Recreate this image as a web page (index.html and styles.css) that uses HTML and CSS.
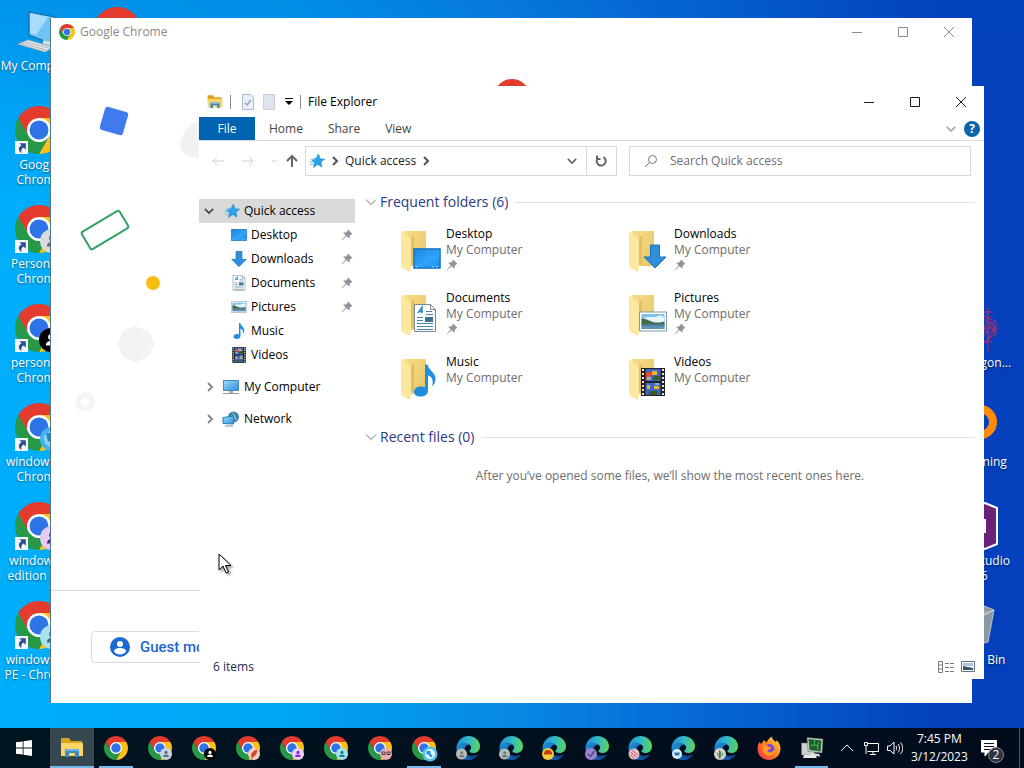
FILE: index.html
```html
<!DOCTYPE html>
<html lang="en">
<head>
    <meta charset="UTF-8">
    <meta name="viewport" content="width=device-width, initial-scale=1.0">
    <title>File Explorer</title>
    <link rel="stylesheet" href="styles.css">
</head>
<body>

    <!-- shared icons -->
    <svg class="sprite" aria-hidden="true">
        <defs>
            <linearGradient id="edgeTop" x1="0" y1="0.4" x2="1" y2="0.5">
                <stop offset="0" stop-color="#1f8fd8"/>
                <stop offset="0.5" stop-color="#2fb9c8"/>
                <stop offset="1" stop-color="#5fd45a"/>
            </linearGradient>
            <linearGradient id="edgeLow" x1="0" y1="0" x2="1" y2="1">
                <stop offset="0" stop-color="#2196dc"/>
                <stop offset="1" stop-color="#0c4c9c"/>
            </linearGradient>
            <linearGradient id="fox" x1="1" y1="0" x2="0" y2="1">
                <stop offset="0" stop-color="#ffe14a"/>
                <stop offset="0.45" stop-color="#ff8a1e"/>
                <stop offset="1" stop-color="#f5234f"/>
            </linearGradient>
            <linearGradient id="screenBlue" x1="0" y1="0" x2="1" y2="1">
                <stop offset="0" stop-color="#1c86e0"/>
                <stop offset="0.6" stop-color="#2fa4fa"/>
                <stop offset="1" stop-color="#1c8cec"/>
            </linearGradient>
            <linearGradient id="folderBack" x1="0" y1="0" x2="1" y2="1">
                <stop offset="0" stop-color="#f6dc86"/>
                <stop offset="1" stop-color="#e8c566"/>
            </linearGradient>
            <linearGradient id="pcScreen" x1="0" y1="0" x2="1" y2="1">
                <stop offset="0" stop-color="#9fdcfb"/>
                <stop offset="1" stop-color="#2a8fdc"/>
            </linearGradient>
        </defs>
        <symbol id="chrome" viewBox="0 0 48 48">
            <circle cx="24" cy="24" r="13" fill="#fff"/>
            <path fill="#e33b2e" d="M24 12H44.78a24 24 0 0 0-41.56 0L13.61 30A12 12 0 0 1 24 12Z"/>
            <path fill="#fbc116" d="M34.39 30 24 48A24 24 0 0 0 44.78 12H24A12 12 0 0 1 34.39 30Z"/>
            <path fill="#279847" d="M13.61 30 3.22 12A24 24 0 0 0 24 48L34.39 30a12 12 0 0 1-20.78 0Z"/>
            <circle cx="24" cy="24" r="9.5" fill="#2f74e6"/>
        </symbol>
        <symbol id="edge" viewBox="0 0 48 48">
            <path fill="#154a90" d="M17 16C12 24 15 34 24 38c7 3 15 1 20-1-4 7-11 11-19 11C11 48 6 40 6 32c0-8 5-14 11-16Z"/>
            <path fill="url(#edgeLow)" d="M1 23C3 14 12 9 22 12c4 1 6 3 7 5-10-1-14 8-11 15 3 8 10 12 16 14-3 1-6 2-9 2C9 48 0 36 1 23Z"/>
            <path fill="url(#edgeTop)" d="M1 22C3 9 13 0 25 0c14 0 23 11 23 20 0 9-6 14-13 14-6 0-9-2-8-5 6-5 3-11-3-14-9-4-19-1-23 7Z"/>
        </symbol>
        <symbol id="person" viewBox="0 0 10 10">
            <circle cx="5" cy="3.2" r="1.8"/>
            <path d="M1.8 8.4C1.8 6.4 3.2 5.6 5 5.6s3.2.8 3.2 2.8Z"/>
        </symbol>
        <symbol id="shortcut" viewBox="0 0 12 12">
            <path fill="#f4f6f8" d="M0 0h12v12H0z"/>
            <path fill="#2b4f95" d="M4 2h6v6L8 6C6 7 5.500 8.500 6 11 3 9.500 2.500 6 6 4Z"/>
        </symbol>
        <symbol id="pin" viewBox="0 0 12 12">
            <path fill="#8d949a" d="M7 0.500 11.500 5 10 5.600 8.700 7 8.500 9.800 5.500 7.200 1 11.300 0.600 11 4.700 6.400 2.200 3.600 5 3.400 6.500 2Z"/>
        </symbol>
        <symbol id="star" viewBox="0 0 16 16">
            <path fill="#2ba4ec" stroke="#1b7fc4" stroke-width="0.600" d="M9.500 1 11 5.700l4.600.6-3.700 2.700 1.100 5-4.300-2.500-4.200 2.900 1-4.600L3.500 8 2 6.500l5-1Z"/>
            <path stroke="#74c5f2" d="M0 9h4M1 11.500h3M2 6.500h4" fill="none"/>
        </symbol>
        <symbol id="explorer" viewBox="0 0 24 22">
            <path fill="#d9a21b" d="M1 1h8l2 3h11v5H1z"/>
            <path fill="#fbd667" d="M1 6h22v13H1z"/>
            <path fill="#3f88c0" d="M5 12h14v8h-4v-4H9v4H5z"/>
            <path fill="#6ab4e6" d="M5 12h14v2H5z"/>
        </symbol>
        <symbol id="desktopIcon" viewBox="0 0 16 12">
            <path fill="url(#screenBlue)" stroke="#0f6cb8" stroke-width="0.700" d="M.5.5h15v11H.5z"/>
            <path stroke="#cfe9fb" stroke-width="0.500" stroke-dasharray="1 1" d="M1.500 10.700h1M11 10.700h4"/>
        </symbol>
        <symbol id="arrowIcon" viewBox="0 0 24 24">
            <path fill="#2f8fdb" stroke="#1d74ba" d="M7.500.5h9v12h6.500L12 23.500 1 12.500h6.500z"/>
        </symbol>
        <symbol id="docIcon" viewBox="0 0 22 28">
            <path fill="#fff" stroke="#7b8790" d="M.5.5h16l5 5v22H.5z"/>
            <path fill="none" stroke="#7b8790" d="M16.500.5v5h5"/>
            <path fill="none" stroke="#2584c4" stroke-width="1.400" d="M4 9l4-6v6M5 7.500h4"/>
            <path stroke="#4a85ad" d="M12 7.500h6M12 10.500h7M3 13.500h6M3 16.500h6M3 19.500h16M3 22.500h16M3 25.500h16"/>
            <path fill="#3b7193" d="M11 13h8v5h-8z"/>
        </symbol>
        <symbol id="picIcon" viewBox="0 0 28 20">
            <path fill="#fff" stroke="#7e96a8" d="M.5.5h27v19H.5z"/>
            <path fill="#7fc1ec" d="M2.500 2.500h23v15h-23z"/>
            <path fill="#e8f4fb" d="M5 7c5-3 9 0 13-2s7-1 7 2v5H2.500V9z"/>
            <path fill="#3d6e4c" d="M2.500 7c5 0 9 3 13 4 4 0 7 0 10-1v3h-23z"/>
            <path fill="#5f94b8" d="M2.500 13h23v4.500h-23z"/>
            <path fill="#38617d" d="M2.500 13h23v1h-23z"/>
        </symbol>
        <symbol id="musicIcon" viewBox="0 0 22 32">
            <path fill="#1e8fe0" d="M11 0h2.500c1 6 8.500 8 8 15-.2 3-1.500 5-3.500 7 2-6 0-10-4-11v15c0 4-3.500 6-7.500 6-4 0-6.500-2-6.500-4.500C0 24 3 22 7 22c1.500 0 3 .3 4 1Z"/>
        </symbol>
        <symbol id="videoIcon" viewBox="0 0 24 28">
            <path fill="#23211f" d="M0 0h24v28H0z"/>
            <path stroke="#e4e2dc" stroke-width="2" stroke-dasharray="2 2" d="M2 1v27M22 1v27"/>
            <path fill="#3c66c8" d="M4.500 1h15v12h-15zM4.500 15h15v12h-15z"/>
            <path fill="#e14b34" d="M5 4h5v4l-3 4H5z"/>
            <path fill="#ecb52c" d="M11 3h5v4h-5zM6 17h3v4H6zM13 18h5v3h-5z"/>
            <path fill="#3d5a23" d="M13 8h6v4h-8zM8 23h8v4H8z"/>
            <path fill="#7fb5ee" d="M6 9h4v3H6zM14 15h4v2h-4z"/>
        </symbol>
        <symbol id="pcIcon" viewBox="0 0 18 16">
            <path fill="url(#pcScreen)" stroke="#4689b5" d="M1.500 1.500h15v10h-15z"/>
            <path fill="#a5b0b8" d="M7 12h4v2H7z"/>
            <path fill="#8e9aa3" d="M1 14h16v1H1z"/>
        </symbol>
        <symbol id="netIcon" viewBox="0 0 18 16">
            <circle cx="11.500" cy="6" r="5.500" fill="#3f84ac"/>
            <path fill="#85b8d2" d="M10 1c3 2 5 6 4 10l-2-5z"/>
            <path fill="url(#pcScreen)" stroke="#247db8" d="M1 6.500 11.500 5v8L1 12.500z"/>
            <path fill="#7793a5" d="M3 14.500h8v1H3z"/>
        </symbol>
        <symbol id="folder" viewBox="0 0 40 42">
            <path fill="url(#folderBack)" d="M3 1h22v35H3z"/>
            <path fill="#e3bf62" d="M10 8l3-2v28h-3z"/>
            <path fill="#fbe7a0" d="M0 1l10 7v29l-1 5-9-5z"/>
        </symbol>
        <symbol id="chevDown" viewBox="0 0 12 12">
            <path fill="none" stroke="currentColor" d="M1 3.500l5 5 5-5"/>
        </symbol>
        <symbol id="chevRight" viewBox="0 0 12 12">
            <path fill="none" stroke="currentColor" d="M4 2l4 4-4 4"/>
        </symbol>
        <symbol id="min" viewBox="0 0 12 12"><path fill="none" stroke="currentColor" d="M1 6.500h10"/></symbol>
        <symbol id="max" viewBox="0 0 12 12"><path fill="none" stroke="currentColor" d="M1.500 1.500h9v9h-9z"/></symbol>
        <symbol id="close" viewBox="0 0 12 12"><path fill="none" stroke="currentColor" d="M1 1l10 10M11 1 1 11"/></symbol>
    </svg>

    <main class="desktop">

        <!-- desktop shortcuts -->
        <div class="shortcuts col-one">
            <a class="shortcut" href="#">
                <svg viewBox="0 0 48 48">
                    <path fill="#6fc3f5" stroke="#1f5f94" d="M14 5l26 5v28L14 28z"/>
                    <path fill="#a8dcfa" d="M15 6l18 4-12 18-6-2z"/>
                    <path fill="#d9dfe4" d="M28 33l14 4v3l-14-3z"/>
                    <path fill="#e4e8eb" stroke="#9fadb7" d="M3 37l10-4 25 7-8 5z"/>
                    <path fill="none" stroke="#a9b5be" d="M6 36l25 7M10 35l24 6"/>
                </svg>
                <span>My Computer</span>
            </a>
            <a class="shortcut" href="#">
                <svg viewBox="0 0 48 48"><use href="#chrome"/><use href="#shortcut" y="35" width="13" height="13"/></svg>
                <span>Google<br>Chrome</span>
            </a>
            <a class="shortcut" href="#">
                <svg viewBox="0 0 48 48"><use href="#chrome"/><circle cx="37" cy="36" r="12" fill="#d8dcdf"/><use href="#person" x="29" y="28" width="16" height="16" fill="#5d6870"/><use href="#shortcut" y="35" width="13" height="13"/></svg>
                <span>Person 1 -<br>Chrome</span>
            </a>
            <a class="shortcut" href="#">
                <svg viewBox="0 0 48 48"><use href="#chrome"/><circle cx="36" cy="36" r="12" fill="#000"/><use href="#person" x="28" y="28" width="16" height="16" fill="#fff"/><use href="#shortcut" y="35" width="13" height="13"/></svg>
                <span>personal -<br>Chrome</span>
            </a>
            <a class="shortcut" href="#">
                <svg viewBox="0 0 48 48"><use href="#chrome"/><circle cx="37" cy="36" r="12" fill="#42b4ee"/><circle cx="37" cy="36" r="8" fill="#8ad4f8"/><path fill="#1c85cc" d="M31 30h6v7l-4 2z"/><use href="#shortcut" y="35" width="13" height="13"/></svg>
                <span>windows 8 -<br>Chrome</span>
            </a>
            <a class="shortcut" href="#">
                <svg viewBox="0 0 48 48"><use href="#chrome"/><circle cx="37" cy="36" r="12" fill="#e6c9f5"/><use href="#person" x="29" y="28" width="16" height="16" fill="#5a1f8c"/><use href="#shortcut" y="35" width="13" height="13"/></svg>
                <span>windows 9<br>edition - C..</span>
            </a>
            <a class="shortcut" href="#">
                <svg viewBox="0 0 48 48"><use href="#chrome"/><circle cx="37" cy="36" r="12" fill="#a9e2ee"/><use href="#person" x="29" y="28" width="16" height="16" fill="#1f7686"/><use href="#shortcut" y="35" width="13" height="13"/></svg>
                <span>windows XP<br>PE - Chrome</span>
            </a>
        </div>
        <div class="shortcuts col-two">
            <a class="shortcut" href="#">
                <svg viewBox="0 0 48 48"><use href="#chrome"/></svg>
                <span>Chrome</span>
            </a>
        </div>
        <div class="shortcuts col-last">
            <a class="shortcut" href="#">
                <svg viewBox="0 0 48 48">
                    <g fill="none" stroke="#b32c6a">
                        <path d="M24 6 38 14l8 10-8 12-14 8M38 3v44M34 8h8M34 38h8M34 14l12 16M46 16 32 34M33 24h14M36 12l10 6v12l-10 6"/>
                        <circle cx="39" cy="24" r="5"/>
                    </g>
                </svg>
                <span>Mandragon...</span>
            </a>
            <a class="shortcut" href="#">
                <svg viewBox="0 0 48 48"><circle cx="30" cy="19" r="13" fill="none" stroke="#ff8a0a" stroke-width="8"/></svg>
                <span>LightTuning</span>
            </a>
            <a class="shortcut" href="#">
                <svg viewBox="0 0 48 48">
                    <path fill="#69217a" stroke="#fff" stroke-width="2" d="M16 6 35 1l12 5v36l-12 5-19-5z"/>
                    <path fill="#fff" d="M20 17h16v14H20z"/>
                </svg>
                <span>Visual Studio<br>2026</span>
            </a>
            <a class="shortcut" href="#">
                <svg viewBox="0 0 48 48">
                    <path fill="#8b98a3" stroke="#b9c6cf" d="M6 8l28-3 10 4-6 32-12 3-16-3z"/>
                    <path fill="#9dabb5" d="M8 10h24l10 0-8 4z"/>
                    <path stroke="#dbe4ea" fill="none" d="M6 8l28 6 10-5"/>
                </svg>
                <span>Recycle Bin</span>
            </a>
        </div>

        <!-- Chrome profile picker -->
        <section class="window chrome-window">
            <header class="titlebar">
                <svg class="icon16"><use href="#chrome"/></svg>
                <h2>Google Chrome</h2>
                <div class="controls">
                    <button type="button" aria-label="Minimize"><svg><use href="#min"/></svg></button>
                    <button type="button" aria-label="Maximize"><svg><use href="#max"/></svg></button>
                    <button type="button" aria-label="Close"><svg><use href="#close"/></svg></button>
                </div>
            </header>
            <div class="picker">
                <svg class="picker-logo"><use href="#chrome"/></svg>
                <svg class="shapes" viewBox="0 0 200 420">
                    <rect x="51" y="63" width="24" height="24" rx="3" fill="#3f7bee" transform="rotate(16 63 75)"/>
                    <path fill="#eff2f3" d="M147 76c8 0 18 7 18 17s-4 19-16 19c-9 0-20-4-20-12 0-9 9-24 18-24Z"/>
                    <rect x="32" y="174" width="44" height="20" rx="2" fill="none" stroke="#35a065" stroke-width="2" transform="rotate(-31 54 184)"/>
                    <circle cx="102" cy="237" r="7" fill="#f8bd10"/>
                    <path fill="#f1f3f4" d="M84 280l14 5 5 13-6 13-12 5-13-5-5-13 5-13z"/>
                    <circle cx="34" cy="356" r="10" fill="#f4f5f5"/>
                    <path fill="#fff" d="M34 351l5 5-5 5-5-5z"/>
                </svg>
            </div>
            <footer class="picker-footer">
                <button type="button" class="guest">
                    <svg viewBox="0 0 22 22">
                        <circle cx="11" cy="11" r="10" fill="#1c69d4"/>
                        <circle cx="11" cy="8" r="3" fill="#fff"/>
                        <path fill="#fff" d="M5 15.500c0-2.500 3-3.500 6-3.500s6 1 6 3.500c-1.500 2-3.500 3-6 3s-4.500-1-6-3Z"/>
                    </svg>
                    Guest mode
                </button>
            </footer>
        </section>

        <!-- File Explorer -->
        <section class="window explorer">
            <header class="titlebar">
                <svg class="icon16"><use href="#explorer"/></svg>
                <i class="sep"></i>
                <svg class="icon16 props" viewBox="0 0 16 16"><path fill="#eaf0f7" stroke="#a9b7c9" d="M2.500.5h8l3 3v12h-11z"/><path fill="none" stroke="#8fa2bb" stroke-width="1.500" d="M5 9l2 2 4-5"/></svg>
                <svg class="icon16" viewBox="0 0 16 16"><path fill="#dfe5ee" stroke="#c8d1dd" d="M2.500.5h11v15h-11z"/></svg>
                <svg class="customize" viewBox="0 0 8 8"><path d="M0 0h8v1H0zM0 3h8L4 7z"/></svg>
                <i class="sep"></i>
                <h2>File Explorer</h2>
                <div class="controls">
                    <button type="button" aria-label="Minimize"><svg><use href="#min"/></svg></button>
                    <button type="button" aria-label="Maximize"><svg><use href="#max"/></svg></button>
                    <button type="button" aria-label="Close"><svg><use href="#close"/></svg></button>
                </div>
            </header>

            <nav class="tabs">
                <button type="button" class="file">File</button>
                <button type="button">Home</button>
                <button type="button">Share</button>
                <button type="button">View</button>
                <div class="tabs-end">
                    <button type="button" class="expand" aria-label="Expand the ribbon"><svg><use href="#chevDown"/></svg></button>
                    <button type="button" class="help" aria-label="Help">?</button>
                </div>
            </nav>

            <div class="navbar">
                <div class="arrows">
                    <button type="button" aria-label="Back"><svg viewBox="0 0 14 12"><path d="M13 6H2M6 2 2 6l4 4"/></svg></button>
                    <button type="button" aria-label="Forward"><svg viewBox="0 0 14 12"><path d="M1 6h11M8 2l4 4-4 4"/></svg></button>
                    <button type="button" class="recent" aria-label="Recent locations"><svg viewBox="0 0 6 12"><path d="M1 5l2 2 2-2"/></svg></button>
                    <button type="button" class="up" aria-label="Up"><svg viewBox="0 0 14 14"><path d="M7 13V2M2 7l5-5 5 5"/></svg></button>
                </div>
                <div class="address">
                    <svg class="icon16"><use href="#star"/></svg>
                    <svg class="crumb"><use href="#chevRight"/></svg>
                    <button type="button">Quick access</button>
                    <svg class="crumb"><use href="#chevRight"/></svg>
                    <button type="button" class="drop" aria-label="Previous locations"><svg><use href="#chevDown"/></svg></button>
                    <button type="button" class="refresh" aria-label="Refresh"><svg viewBox="0 0 14 14"><path d="M3.500 4.500a4.500 4.500 0 1 0 6-1.300M3 1.500v3.500h3.500"/></svg></button>
                </div>
                <label class="search">
                    <svg viewBox="0 0 14 14"><circle cx="8.500" cy="5.500" r="4"/><path d="M5.500 8.500 1 13"/></svg>
                    <input type="text" placeholder="Search Quick access" aria-label="Search Quick access">
                </label>
            </div>

            <div class="body">
                <ul class="tree">
                    <li><a class="active" href="#"><svg class="twist"><use href="#chevDown"/></svg><svg class="icon16"><use href="#star"/></svg>Quick access</a></li>
                    <li><a class="child" href="#"><svg class="icon16"><use href="#desktopIcon"/></svg>Desktop<svg class="pin"><use href="#pin"/></svg></a></li>
                    <li><a class="child" href="#"><svg class="icon16"><use href="#arrowIcon"/></svg>Downloads<svg class="pin"><use href="#pin"/></svg></a></li>
                    <li><a class="child" href="#"><svg class="icon16"><use href="#docIcon"/></svg>Documents<svg class="pin"><use href="#pin"/></svg></a></li>
                    <li><a class="child" href="#"><svg class="icon16"><use href="#picIcon"/></svg>Pictures<svg class="pin"><use href="#pin"/></svg></a></li>
                    <li><a class="child" href="#"><svg class="icon16"><use href="#musicIcon"/></svg>Music</a></li>
                    <li><a class="child" href="#"><svg class="icon16"><use href="#videoIcon"/></svg>Videos</a></li>
                    <li class="root"><a href="#"><svg class="twist"><use href="#chevRight"/></svg><svg class="icon18"><use href="#pcIcon"/></svg>My Computer</a></li>
                    <li class="root"><a href="#"><svg class="twist"><use href="#chevRight"/></svg><svg class="icon18"><use href="#netIcon"/></svg>Network</a></li>
                </ul>

                <div class="content">
                    <h3><svg><use href="#chevDown"/></svg>Frequent folders (6)</h3>
                    <div class="folders">
                        <a class="folder" href="#">
                            <svg viewBox="0 0 40 42"><use href="#folder"/><use href="#desktopIcon" x="12" y="18" width="28" height="21"/></svg>
                            <span><b>Desktop</b>My Computer<svg class="pin"><use href="#pin"/></svg></span>
                        </a>
                        <a class="folder" href="#">
                            <svg viewBox="0 0 40 42"><use href="#folder"/><use href="#arrowIcon" x="14" y="14" width="24" height="25"/></svg>
                            <span><b>Downloads</b>My Computer<svg class="pin"><use href="#pin"/></svg></span>
                        </a>
                        <a class="folder" href="#">
                            <svg viewBox="0 0 40 42"><use href="#folder"/><use href="#docIcon" x="13" y="10" width="22" height="28"/></svg>
                            <span><b>Documents</b>My Computer<svg class="pin"><use href="#pin"/></svg></span>
                        </a>
                        <a class="folder" href="#">
                            <svg viewBox="0 0 40 42"><use href="#folder"/><use href="#picIcon" x="10" y="17" width="28" height="21"/></svg>
                            <span><b>Pictures</b>My Computer<svg class="pin"><use href="#pin"/></svg></span>
                        </a>
                        <a class="folder" href="#">
                            <svg viewBox="0 0 40 42"><use href="#folder"/><use href="#musicIcon" x="13" y="6" width="22" height="33"/></svg>
                            <span><b>Music</b>My Computer</span>
                        </a>
                        <a class="folder" href="#">
                            <svg viewBox="0 0 40 42"><use href="#folder"/><use href="#videoIcon" x="12" y="10" width="24" height="28"/></svg>
                            <span><b>Videos</b>My Computer</span>
                        </a>
                    </div>
                    <h3><svg><use href="#chevDown"/></svg>Recent files (0)</h3>
                    <p class="empty">After you’ve opened some files, we’ll show the most recent ones here.</p>
                </div>
            </div>

            <footer class="status">
                <span>6 items</span>
                <button type="button" aria-label="Details view"><svg viewBox="0 0 16 12"><path fill="none" stroke="#7a7a7a" d="M.5.5h4v11h-4zM.5 4h4M.5 8h4"/><path stroke="#7a7a7a" stroke-dasharray="4 1" d="M7 2.500h9M7 6.500h9M7 10.500h9"/></svg></button>
                <button type="button" aria-label="Thumbnail view"><svg viewBox="0 0 16 12"><path fill="#fff" stroke="#5f7382" d="M1.500.5h13v10h-13z"/><path fill="#a9c8dd" d="M3 2h10v3H3z"/><path fill="#33566e" d="M3 5l5 1 5 1v2H3z"/></svg></button>
            </footer>
        </section>

        <svg class="cursor" viewBox="0 0 14 22"><path fill="#fff" stroke="#000" d="M1 1v16l4-4 3 7 2.500-1-3-6.500H13z"/></svg>
    </main>

    <footer class="taskbar">
        <button type="button" class="start" aria-label="Start"><svg viewBox="0 0 16 16"><path fill="#fff" d="M0 2.300 6.700 1.400v6.200H0zM7.500 1.300 16 0v7.600H7.500zM0 8.400h6.700v6.200L0 13.700zM7.500 8.400H16V16l-8.500-1.200z"/></svg></button>
        <button type="button" class="app open focus" aria-label="File Explorer"><svg><use href="#explorer"/></svg></button>
        <button type="button" class="app open" aria-label="Google Chrome"><svg><use href="#chrome"/></svg></button>
        <button type="button" class="app" aria-label="Chrome profile 1"><svg viewBox="0 0 48 48"><use href="#chrome"/><circle cx="36" cy="36" r="12" fill="#c9d6dd"/><use href="#person" x="27" y="27" width="18" height="18" fill="#58707f"/></svg></button>
        <button type="button" class="app" aria-label="Chrome profile 2"><svg viewBox="0 0 48 48"><use href="#chrome"/><circle cx="36" cy="36" r="12" fill="#000"/><use href="#person" x="27" y="27" width="18" height="18" fill="#fff"/></svg></button>
        <button type="button" class="app" aria-label="Chrome profile 3"><svg viewBox="0 0 48 48"><use href="#chrome"/><circle cx="36" cy="36" r="12" fill="#f3cfc4"/><path fill="#d5482c" d="M42 27c1 8-3 13-11 18l-1-7c2-6 6-10 12-11Z"/></svg></button>
        <button type="button" class="app" aria-label="Chrome profile 4"><svg viewBox="0 0 48 48"><use href="#chrome"/><circle cx="36" cy="36" r="12" fill="#ecd3fa"/><use href="#person" x="27" y="27" width="18" height="18" fill="#8a2bd0"/></svg></button>
        <button type="button" class="app" aria-label="Chrome profile 5"><svg viewBox="0 0 48 48"><use href="#chrome"/><circle cx="36" cy="36" r="12" fill="#a5e2ec"/><use href="#person" x="27" y="27" width="18" height="18" fill="#1e7f90"/></svg></button>
        <button type="button" class="app" aria-label="Chrome profile 6"><svg viewBox="0 0 48 48"><use href="#chrome"/><circle cx="36" cy="36" r="12" fill="#e9b0ae"/><path fill="none" stroke="#4a3540" stroke-width="2" d="M28 32h6v5h-6zM38 32h6v5h-6z"/></svg></button>
        <button type="button" class="app open" aria-label="Chrome profile 7"><svg class="overflow" viewBox="0 0 48 48"><use href="#chrome"/><circle cx="36" cy="36" r="15" fill="#52bdf2"/><circle cx="36" cy="36" r="10" fill="#e9f7fe"/><path fill="#1c93dc" d="M30 30h7v5l5 5-5 3-4-6h-5z"/></svg></button>
        <button type="button" class="app small" aria-label="Edge profile 1"><svg viewBox="0 0 48 48"><use href="#edge"/><circle cx="11" cy="36" r="11" fill="#b5bcc0"/><use href="#person" x="3" y="28" width="17" height="17" fill="#847b78"/></svg></button>
        <button type="button" class="app small" aria-label="Edge profile 2"><svg viewBox="0 0 48 48"><use href="#edge"/><circle cx="11" cy="36" r="11" fill="#b5bcc0"/><use href="#person" x="3" y="28" width="17" height="17" fill="#6f7a66"/></svg></button>
        <button type="button" class="app small" aria-label="Edge profile 3"><svg viewBox="0 0 48 48"><use href="#edge"/><circle cx="12" cy="36" r="12" fill="#f6cf3e"/><path fill="#c43c16" d="M3 37c2-8 5-9 9-9s7 1 9 9z"/></svg></button>
        <button type="button" class="app small" aria-label="Edge profile 4"><svg viewBox="0 0 48 48"><use href="#edge"/><circle cx="12" cy="36" r="12" fill="#9a86c8"/><path fill="none" stroke="#5b4596" stroke-width="3" d="M5 36l6 5 8-11"/></svg></button>
        <button type="button" class="app small" aria-label="Edge profile 5"><svg viewBox="0 0 48 48"><use href="#edge"/><circle cx="12" cy="36" r="11" fill="#e8c5cb"/><path stroke="#c55063" stroke-width="2" d="M5 32l12 10M8 28l12 10M4 37l8 8"/></svg></button>
        <button type="button" class="app small" aria-label="Edge profile 6"><svg viewBox="0 0 48 48"><use href="#edge"/><circle cx="12" cy="36" r="10" fill="#d7ecfb"/><path fill="#3179b5" d="M6 33h12l-2 6H8z"/></svg></button>
        <button type="button" class="app small" aria-label="Edge profile 7"><svg viewBox="0 0 48 48"><use href="#edge"/><circle cx="12" cy="36" r="12" fill="#d6d3cb"/><path fill="#3f7f42" d="M11 27l3 5-1 13h-3V32zM5 32l4 4v7zM19 32l-4 4v7z"/></svg></button>
        <button type="button" class="app small" aria-label="Firefox">
            <svg viewBox="0 0 48 48">
                <path fill="url(#fox)" d="M5 12c1 2 2 3 4 3 2-4 5-6 7-7 0 3 1 4 3 5 2-4 5-9 11-12 0 5 3 7 8 11 1-1 1-3 1-4 5 4 8 11 8 17 0 13-10 23-23 23S1 38 1 26C1 20 3 15 5 12Z"/>
                <circle cx="25" cy="26" r="10" fill="#7a46d8"/>
                <path fill="#ff9a25" d="M12 20c5-3 9-1 12 2 4 0 5 1 4 3-2 2-6 1-7 5 4 5 11 3 14-4 1 10-7 14-13 13-8-1-12-9-10-19Z"/>
            </svg>
        </button>
        <button type="button" class="app small open" aria-label="Remote session">
            <svg viewBox="0 0 48 48">
                <path fill="#cfd3d0" stroke="#6b706c" d="M3 14h26v24H3z"/>
                <path fill="#e8eae7" d="M8 38h22l4 6H6z"/>
                <path fill="#c9cdc9" stroke="#5d625e" d="M14 3l32 3-2 28-28-3z"/>
                <path fill="#1f5f2e" d="M17 6l26 3-2 22-22-3z"/>
                <path fill="none" stroke="#48b35a" stroke-width="2" d="M29 8v10l6 2v8M21 18l8 1M38 12l-3 8"/>
                <path fill="#dfe2df" d="M22 34l16 2 3 5-20-2z"/>
            </svg>
        </button>

        <div class="tray">
            <button type="button" aria-label="Show hidden icons"><svg viewBox="0 0 16 16"><path d="M2 11l6-6 6 6"/></svg></button>
            <button type="button" aria-label="Network"><svg viewBox="0 0 16 16"><path d="M4.500 3.500h11v8H4.500M1.500 2.500h3v3h-3zM3 6v8M10 12v2M7 14.500h6"/></svg></button>
            <button type="button" aria-label="Volume"><svg viewBox="0 0 16 16"><path d="M.5 6v4.500h2.500L7 14V2L3 6zM9 6c1 1.500 1 3 0 4.500M11 4c2 2.500 2 6 0 8.500M13.500 2.500c3 3.500 3 8 0 11.500"/></svg></button>
            <div class="clock"><time>7:45 PM</time><time>3/12/2023</time></div>
            <button type="button" class="notes" aria-label="2 notifications">
                <svg viewBox="0 0 16 16"><path class="solid" d="M0 0h16v12H7l-3 4v-4H0z"/><path class="lines" d="M3 3.500h10M3 6.500h10M3 9.500h6"/></svg>
                <span>2</span>
            </button>
            <i class="peek"></i>
        </div>
    </footer>

</body>
</html>
```

FILE: styles.css
```css
* {
    box-sizing: border-box;
}

body {
    margin: 0;
    height: 100vh;
    display: flex;
    flex-direction: column;
    overflow: hidden;
    font-family: "Open Sans", "Noto Sans", sans-serif;
    font-size: 12px;
    line-height: 16px;
    color: #1a1a1a;
    background: linear-gradient(to right, #00aefa 0%, #00a6f2 28%, #0888e2 50%, #0462d2 72%, #0440bc 92%);
}

button {
    padding: 0;
    border: none;
    background: none;
    font: inherit;
    color: inherit;
    cursor: pointer;
}

a {
    color: inherit;
    text-decoration: none;
}

h2, h3, p, ul {
    margin: 0;
    padding: 0;
    font-weight: normal;
}

svg {
    display: block;
    flex: none;
}

.sprite {
    position: absolute;
    width: 0;
    height: 0;
}

.icon16 {
    width: 16px;
    height: 16px;
}

.icon18 {
    width: 18px;
    height: 16px;
}

/* desktop */

.desktop {
    position: relative;
    flex: 1;
    min-height: 0;
    background: linear-gradient(to bottom, rgba(0, 70, 190, 0.25) 0, rgba(0, 70, 190, 0) 200px);
}

.shortcuts {
    position: absolute;
    width: 78px;
}

.col-one {
    left: 0;
    top: 7px;
}

.col-two {
    left: 78px;
    top: 7px;
}

.col-last {
    right: 11px;
    top: 304px;
}

.shortcut {
    display: flex;
    flex-direction: column;
    align-items: center;
    gap: 3px;
    height: 99px;
    line-height: 15px;
    text-align: center;
    white-space: nowrap;
    color: #fff;
    text-shadow: 0 1px 2px rgba(0, 0, 0, 0.5);
}

.shortcut svg {
    width: 48px;
    height: 48px;
}

/* windows */

.window {
    position: absolute;
    display: flex;
    flex-direction: column;
    background: #fff;
}

.titlebar {
    display: flex;
    align-items: center;
    height: 31px;
    padding-left: 8px;
    gap: 5px;
}

.titlebar h2 {
    font-size: 12px;
}

.controls {
    display: flex;
    margin-left: auto;
}

.controls button {
    display: flex;
    align-items: center;
    justify-content: center;
    width: 46px;
    height: 30px;
}

.controls svg {
    width: 12px;
    height: 12px;
}

/* chrome profile picker */

.chrome-window {
    left: 50px;
    top: 18px;
    right: 52px;
    bottom: 25px;
    border-left: 1px solid #50788c;
}

.chrome-window .titlebar {
    padding-left: 8px;
    height: 28px;
    color: #8a8a8a;
}

.picker {
    position: relative;
    flex: 1;
    display: flex;
    flex-direction: column;
    align-items: center;
    padding-top: 33px;
}

.picker-logo {
    width: 36px;
    height: 36px;
}

.shapes {
    position: absolute;
    left: 0;
    top: 0;
    width: 200px;
    height: 420px;
}

.picker-footer {
    height: 113px;
    padding: 40px;
    border-top: 1px solid #d5d8dc;
}

.guest {
    display: flex;
    align-items: center;
    gap: 9px;
    height: 32px;
    padding: 0 17px;
    border: 1px solid #dadce0;
    border-radius: 4px;
    font-family: Roboto, sans-serif;
    font-size: 15px;
    font-weight: 500;
    color: #1c66cc;
}

.guest svg {
    width: 22px;
    height: 22px;
}

/* file explorer */

.explorer {
    left: 199px;
    top: 86px;
    right: 40px;
    bottom: 49px;
}

.sep {
    width: 1px;
    height: 14px;
    margin: 0 2px;
    background: #8a8a8a;
}

.props {
    margin-left: 2px;
}

.customize {
    width: 8px;
    height: 8px;
    margin: 0 0 0 3px;
}

.explorer .titlebar h2 {
    color: #000;
}

.tabs {
    display: flex;
    height: 24px;
    border-bottom: 1px solid #dadbdc;
    color: #444;
}

.tabs > button {
    padding: 0 12px;
    margin-right: 1px;
}

.tabs .file {
    width: 56px;
    margin-right: 2px;
    background: #0063b1;
    color: #fff;
}

.tabs-end {
    display: flex;
    align-items: center;
    gap: 8px;
    margin-left: auto;
    padding-right: 4px;
}

.expand svg {
    width: 10px;
    height: 10px;
    color: #aaa;
    stroke-width: 2;
}

.help {
    width: 16px;
    height: 16px;
    border-radius: 50%;
    background: #0c64ac;
    color: #fff;
    font-weight: bold;
    line-height: 16px;
}

.navbar {
    display: flex;
    padding: 5px 13px 0 12px;
    height: 50px;
}

.arrows {
    display: flex;
    align-items: center;
    width: 94px;
    height: 30px;
    gap: 16px;
    color: #d0d0d0;
}

.arrows svg {
    width: 14px;
    height: 14px;
    fill: none;
    stroke: currentColor;
    stroke-width: 1;
}

.arrows .recent svg {
    width: 6px;
}

.arrows .up {
    margin-left: -8px;
    color: #666;
}

.arrows .up svg {
    stroke-width: 2;
}

.address {
    display: flex;
    align-items: center;
    flex: 1 1 312px;
    height: 30px;
    margin-right: 12px;
    padding-left: 3px;
    gap: 5px;
    border: 1px solid #d9d9d9;
    color: #1a1a1a;
}

.crumb {
    width: 12px;
    height: 12px;
    margin: 0 -1px;
    color: #555;
    stroke-width: 2;
}

.drop {
    margin-left: auto;
    padding: 0 4px;
}

.drop svg {
    width: 10px;
    height: 10px;
    color: #666;
    stroke-width: 2;
}

.refresh {
    height: 28px;
    padding: 0 8px 0 7px;
    border-left: 1px solid #d9d9d9;
}

.refresh svg {
    width: 14px;
    height: 14px;
    fill: none;
    stroke: #666;
    stroke-width: 2;
}

.search {
    display: flex;
    align-items: center;
    flex: 1 1 342px;
    height: 30px;
    padding: 0 14px;
    gap: 12px;
    border: 1px solid #d9d9d9;
}

.search svg {
    width: 14px;
    height: 14px;
    fill: none;
    stroke: #777;
}

.search input {
    flex: 1;
    min-width: 0;
    padding: 0;
    border: none;
    outline: none;
    background: none;
    font: inherit;
}

.search input::placeholder {
    color: #6d6d6d;
    opacity: 1;
}

.body {
    display: flex;
    flex: 1;
    min-height: 0;
    gap: 10px;
}

.tree {
    width: 156px;
    padding-top: 8px;
    list-style: none;
}

.tree a {
    display: flex;
    align-items: center;
    height: 24px;
    padding-left: 5px;
    gap: 4px;
    color: #000;
}

.tree .active {
    background: #d9d9d9;
}

.tree .child {
    padding-left: 32px;
}

.tree .root {
    margin-top: 8px;
}

.twist {
    width: 12px;
    height: 12px;
    color: #8a8a8a;
    stroke-width: 2;
}

.active .twist {
    width: 10px;
    color: #444;
    margin-right: 6px;
}

.root .twist {
    margin-right: 2px;
}

.pin {
    width: 12px;
    height: 12px;
}

.tree .pin {
    margin: 0 2px 0 auto;
}

.content {
    flex: 1;
    padding-right: 9px;
}

.content h3 {
    display: flex;
    align-items: center;
    gap: 3px;
    height: 20px;
    margin-top: 1px;
    font-size: 14px;
    color: #2a3a85;
}

.content h3 svg {
    width: 12px;
    height: 12px;
    color: #777;
}

.content h3::after {
    content: "";
    flex: 1;
    height: 1px;
    margin-left: 4px;
    background: #e2e2e2;
}

.folders {
    display: grid;
    grid-template-columns: 228px 228px;
    grid-auto-rows: 64px;
    margin-bottom: 9px;
    padding: 14px 0 0 36px;
}

.folder {
    display: flex;
    gap: 5px;
    color: #6d6d6d;
}

.folder > svg {
    width: 40px;
    height: 42px;
    margin-top: 4px;
}

.folder b {
    display: block;
    font-weight: normal;
    color: #000;
}

.folder .pin {
    margin-top: 1px;
}

.empty {
    margin-top: 21px;
    text-align: center;
    color: #6d6d6d;
}

.status {
    display: flex;
    align-items: center;
    height: 24px;
    padding: 0 8px 0 14px;
    gap: 6px;
    color: #1e2a4a;
}

.status span {
    margin-right: auto;
}

.status svg {
    width: 16px;
    height: 12px;
}

.cursor {
    position: absolute;
    left: 218px;
    top: 553px;
    width: 14px;
    height: 22px;
    filter: drop-shadow(2px 2px 1px rgba(0, 0, 0, 0.4));
}

/* taskbar */

.taskbar {
    display: flex;
    height: 40px;
    background: linear-gradient(to right, #00151f, #020b1c);
    color: #fff;
}

.start {
    display: flex;
    align-items: center;
    justify-content: center;
    width: 50px;
    padding-right: 2px;
}

.start svg {
    width: 16px;
    height: 16px;
}

.app {
    display: flex;
    align-items: center;
    justify-content: center;
    position: relative;
    width: 44px;
}

.app.small {
    width: 43px;
}

.app svg {
    width: 24px;
    height: 24px;
}

.app .overflow {
    overflow: visible;
}

.app.focus {
    background: #36474f;
}

.app.open::after {
    content: "";
    position: absolute;
    left: 5px;
    right: 5px;
    bottom: 0;
    height: 2px;
    background: #76b9ed;
}

.app.focus::after {
    left: 0;
    right: 0;
}

.tray {
    display: flex;
    align-items: center;
    flex: 1;
    padding-left: 6px;
    gap: 8px;
}

.tray svg {
    width: 16px;
    height: 16px;
    fill: none;
    stroke: #fff;
}

.clock {
    display: flex;
    flex-direction: column;
    align-items: center;
    margin: 0 5px 0 0;
    line-height: 18px;
}

.notes {
    position: relative;
}

.notes .solid {
    fill: #fff;
}

.notes .lines {
    stroke: #0a1626;
}

.notes span {
    position: absolute;
    left: 7px;
    top: 7px;
    width: 16px;
    height: 16px;
    border: 1px solid #888;
    border-radius: 50%;
    background: #2d3440;
    line-height: 14px;
}

.peek {
    width: 1px;
    height: 40px;
    margin: 0 4px 0 auto;
    background: #4a5568;
}
```
